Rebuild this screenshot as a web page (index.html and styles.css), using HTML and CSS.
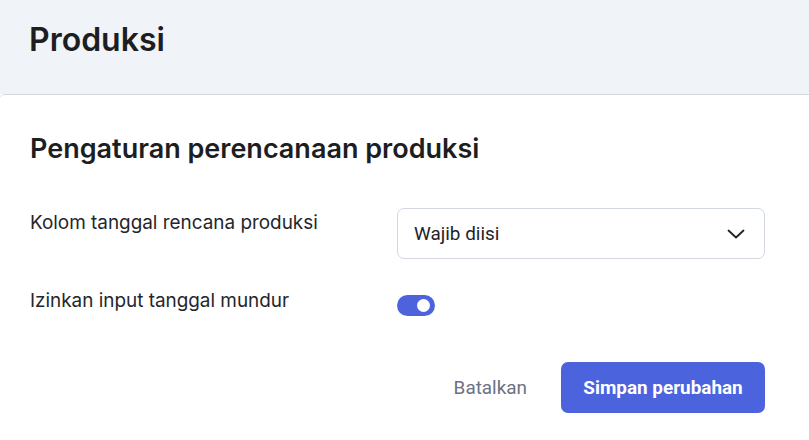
FILE: index.html
```html
<!DOCTYPE html>
<html lang="id">
<head>
<meta charset="utf-8">
<title>Produksi</title>
<link rel="stylesheet" href="styles.css">
</head>
<body>
<header class="page-header">
  <h1 class="page-title">Produksi</h1>
</header>
<main class="card">
  <h2 class="section-title">Pengaturan perencanaan produksi</h2>
  <div class="form-row row-select">
    <label class="form-label">Kolom tanggal rencana produksi</label>
    <div class="select">
      <span class="select-value">Wajib diisi</span>
      <svg class="chevron" width="18" height="10" viewBox="0 0 18 10" fill="none">
        <path d="M1.5 1.5 L9 8.5 L16.5 1.5" stroke="#1f2328" stroke-width="1.8" stroke-linecap="round" stroke-linejoin="round"/>
      </svg>
    </div>
  </div>
  <div class="form-row row-toggle">
    <label class="form-label">Izinkan input tanggal mundur</label>
    <span class="toggle"><span class="knob"></span></span>
  </div>
  <div class="actions">
    <button class="btn btn-cancel">Batalkan</button>
    <button class="btn btn-primary">Simpan perubahan</button>
  </div>
</main>
</body>
</html>
```
FILE: styles.css
```css
* { box-sizing: border-box; }
html, body { margin: 0; padding: 0; }
body {
  width: 809px;
  height: 440px;
  overflow: hidden;
  background: #ffffff;
  font-family: Inter, "Noto Sans", sans-serif;
  color: #1f2328;
}
.page-header {
  height: 94px;
  background: #f0f3f8;
  padding: 20px 29px 0;
}
.page-title {
  margin: 0;
  font-size: 32px;
  font-weight: 600;
  line-height: 40px;
  color: #1c1e21;
}
.card {
  background: #ffffff;
  border-top: 1px solid #d3d7de;
  border-top-left-radius: 6px;
  margin-left: -1px;
  padding: 38px 44px 0 31px;
}
.section-title {
  margin: 0;
  font-size: 27px;
  font-weight: 600;
  line-height: 32px;
  color: #1c1e21;
}
.form-row {
  display: flex;
  align-items: flex-start;
}
.row-select { margin-top: 43px; }
.row-toggle { margin-top: 30px; }
.form-label {
  width: 367px;
  font-size: 18.9px;
  line-height: 24px;
  color: #23262b;
}
.row-select .form-label { margin-top: 3px; }
.select {
  width: 368px;
  height: 51px;
  border: 1px solid #d3d8e0;
  border-radius: 7px;
  display: flex;
  align-items: center;
  justify-content: space-between;
  padding: 0 19px 0 16px;
  font-family: Roboto, "Liberation Sans", sans-serif;
  font-size: 18.9px;
  color: #1f2328;
}
.chevron { display: block; }
.toggle {
  position: relative;
  width: 38px;
  height: 21px;
  margin-top: 6px;
  border-radius: 11px;
  background: #4c63dd;
  display: block;
}
.knob {
  position: absolute;
  top: 4px;
  right: 5px;
  width: 13px;
  height: 13px;
  border-radius: 50%;
  background: #ffffff;
}
.actions {
  display: flex;
  justify-content: flex-end;
  align-items: center;
  gap: 34px;
  margin-top: 46px;
}
.btn {
  font-family: Roboto, "Liberation Sans", sans-serif;
  font-size: 18.9px;
  border: none;
  cursor: pointer;
}
.btn-cancel {
  background: transparent;
  color: #6b7280;
  padding: 0;
}
.btn-primary {
  width: 204px;
  height: 51px;
  background: #4b63dd;
  color: #ffffff;
  font-weight: 700;
  border-radius: 7px;
}
```
